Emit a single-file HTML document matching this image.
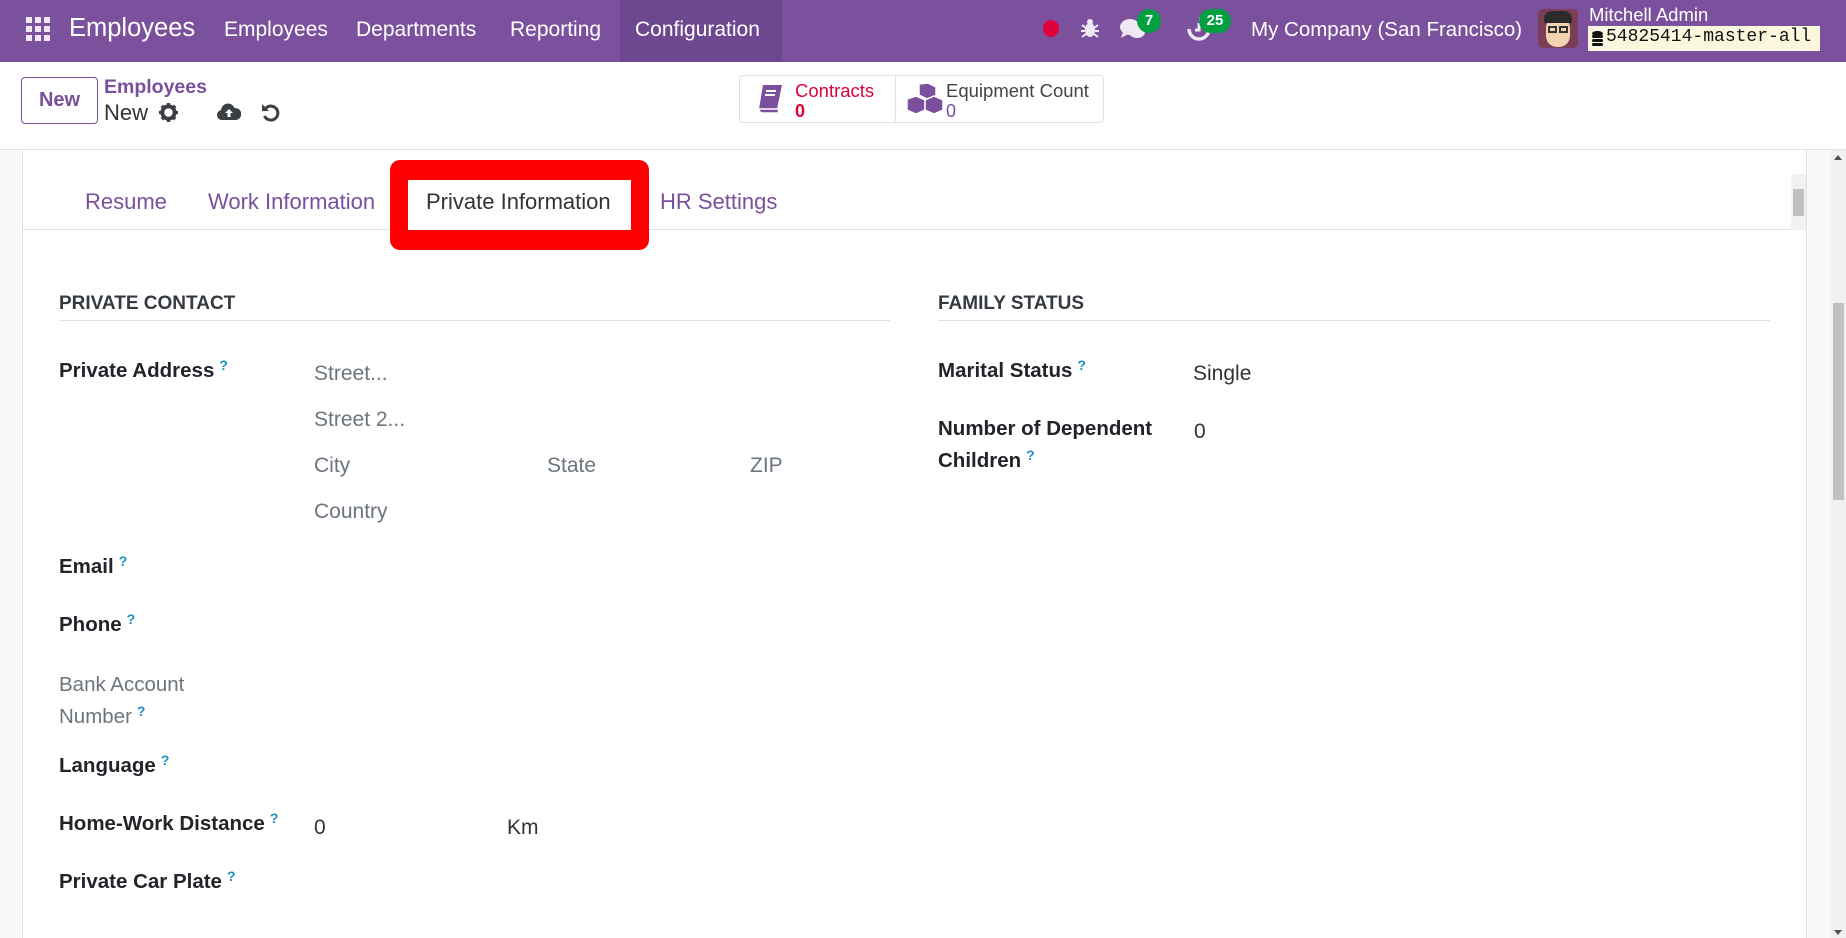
<!DOCTYPE html>
<html><head><meta charset="utf-8">
<style>
*{margin:0;padding:0;box-sizing:border-box}
body{width:1846px;height:938px;overflow:hidden;background:#fff;font-family:"Liberation Sans",sans-serif;position:relative;color:#212529}
.a{position:absolute;white-space:nowrap}
.nav{position:absolute;left:0;top:0;width:1846px;height:62px;background:#7b519d}
.nav .t{color:#fff;font-size:21px;top:18px}
.lbl{font-weight:bold;font-size:20.5px;color:#212529;line-height:24px}
.q{color:#1a8fc4;font-size:14px;font-weight:bold;vertical-align:top;margin-left:5px;position:relative;top:-6px}
.val{font-size:21px;color:#6c757d;line-height:24px}
.tab{font-size:22px;color:#7a4f9c;top:189px}
</style></head><body>
<div class="nav">
  <svg class="a" style="left:26px;top:17px" width="24" height="24" viewBox="0 0 24 24" fill="#f0e8f5">
    <rect x="0" y="0" width="6" height="6"/><rect x="9" y="0" width="6" height="6"/><rect x="18" y="0" width="6" height="6"/>
    <rect x="0" y="9" width="6" height="6"/><rect x="9" y="9" width="6" height="6"/><rect x="18" y="9" width="6" height="6"/>
    <rect x="0" y="18" width="6" height="6"/><rect x="9" y="18" width="6" height="6"/><rect x="18" y="18" width="6" height="6"/>
  </svg>
  <div class="a t" style="left:69px;top:14px;font-size:25.5px">Employees</div>
  <div class="a t" style="left:224px">Employees</div>
  <div class="a t" style="left:356px">Departments</div>
  <div class="a t" style="left:510px">Reporting</div>
  <div class="a" style="left:620px;top:0;width:162px;height:62px;background:#6d4890"></div>
  <div class="a t" style="left:635px">Configuration</div>
  <div class="a" style="left:1043px;top:20px;width:16px;height:17px;border-radius:50%;background:#e0003a"></div>
  <svg class="a" style="left:1081px;top:17px" width="18" height="22" viewBox="0 0 18 22" fill="#f0e8f5"><ellipse cx="9" cy="13" rx="5" ry="7"/><circle cx="9" cy="5" r="3"/><path d="M1 8l4 3M17 8l-4 3M0 14h4M18 14h-4M1 20l4-3M17 20l-4-3" stroke="#f0e8f5" stroke-width="2"/></svg>
  <svg class="a" style="left:1119px;top:17px" width="28" height="24" viewBox="0 0 28 24" fill="#f0e8f5"><ellipse cx="11" cy="10" rx="10" ry="8"/><path d="M4 15l-2 6 7-4z"/><ellipse cx="18" cy="15" rx="8" ry="6" fill="#f0e8f5"/></svg>
  <div class="a" style="left:1137px;top:9px;width:24px;height:24px;border-radius:12px;background:#00a040;color:#fff;font-size:15px;text-align:center;line-height:24px;font-weight:bold">7</div>
  <svg class="a" style="left:1186px;top:16px" width="26" height="26" viewBox="0 0 26 26"><path d="M13 3a10 10 0 1 1-10 10" fill="none" stroke="#f0e8f5" stroke-width="3.5"/><path d="M13 7v7h-4" stroke="#f0e8f5" stroke-width="3" fill="none"/></svg>
  <div class="a" style="left:1199px;top:9px;width:32px;height:24px;border-radius:12px;background:#00a040;color:#fff;font-size:15px;text-align:center;line-height:24px;font-weight:bold">25</div>
  <div class="a t" style="left:1251px;font-size:20.5px">My Company (San Francisco)</div>
  <div class="a" style="left:1538px;top:9px;width:40px;height:39px;border-radius:5px;background:#7a3e57;overflow:hidden">
    <div class="a" style="left:8px;top:8px;width:24px;height:30px;border-radius:11px;background:#f3d3b0"></div>
    <div class="a" style="left:6px;top:2px;width:28px;height:12px;border-radius:8px 8px 2px 2px;background:#2b2b2b"></div>
    <div class="a" style="left:10px;top:17px;width:9px;height:7px;border:2px solid #333"></div>
    <div class="a" style="left:21px;top:17px;width:9px;height:7px;border:2px solid #333"></div>
  </div>
  <div class="a" style="left:1589px;top:4px;color:#fff;font-size:18.5px">Mitchell Admin</div>
  <div class="a" style="left:1588px;top:26px;width:232px;height:25px;background:#fbf7df"></div>
  <svg class="a" style="left:1592px;top:31px" width="11" height="15" viewBox="0 0 11 15" fill="#111"><ellipse cx="5.5" cy="2.5" rx="5.5" ry="2.5"/><rect x="0" y="4" width="11" height="3" rx="1.5"/><rect x="0" y="8" width="11" height="3" rx="1.5"/><rect x="0" y="12" width="11" height="3" rx="1.5"/></svg>
  <div class="a" style="left:1606px;top:27px;font-family:'Liberation Mono',monospace;font-size:18px;color:#111">54825414-master-all</div>
</div>

<div class="a" style="left:21px;top:77px;width:77px;height:47px;border:1px solid #7a4f9c;border-radius:4px;color:#7a4f9c;font-size:20px;font-weight:bold;text-align:center;line-height:45px">New</div>
<div class="a" style="left:104px;top:76px;color:#7a4f9c;font-size:19.5px;font-weight:bold">Employees</div>
<div class="a" style="left:104px;top:100px;color:#333;font-size:22px">New</div>
<svg class="a" style="left:159px;top:103px" width="19" height="19" viewBox="0 0 20 20"><circle cx="10" cy="10" r="6.5" fill="none" stroke="#3c3f43" stroke-width="4"/><path d="M10 0v5M10 15v5M0 10h5M15 10h5M3 3l3.5 3.5M13.5 13.5L17 17M17 3l-3.5 3.5M6.5 13.5L3 17" stroke="#3c3f43" stroke-width="3.5"/></svg>
<svg class="a" style="left:217px;top:103px" width="24" height="17" viewBox="0 0 24 17"><path d="M5 17a5 5 0 0 1-1-9.9A7 7 0 0 1 17.5 5 5.5 5.5 0 0 1 19 17z" fill="#3c3f43"/><path d="M12 6l-4 4h2.5v4h3v-4H16z" fill="#fff"/></svg>
<svg class="a" style="left:261px;top:102px" width="19" height="20" viewBox="0 0 19 20"><path d="M5 6a7 7 0 1 1-1.5 8" fill="none" stroke="#3c3f43" stroke-width="3"/><path d="M1 2v7h7z" fill="#3c3f43"/></svg>

<div class="a" style="left:739px;top:75px;width:365px;height:48px;border:1px solid #dee2e6;border-radius:4px"></div>
<div class="a" style="left:895px;top:75px;width:1px;height:48px;background:#dee2e6"></div>
<svg class="a" style="left:756px;top:84px" width="28" height="30" viewBox="0 0 28 30"><path d="M7 1h19l-5 24H3z" fill="#7a4f9c"/><path d="M3 25q0 4 4 4h15l1-4z" fill="#7a4f9c" stroke="#fff" stroke-width="1.5"/><path d="M10 7h10M9 11h10" stroke="#fff" stroke-width="2"/></svg>
<div class="a" style="left:795px;top:80px;color:#e0003a;font-size:18.5px">Contracts</div>
<div class="a" style="left:795px;top:101px;color:#e0003a;font-size:18px;font-weight:bold">0</div>
<svg class="a" style="left:905px;top:82px" width="42" height="36" viewBox="0 0 42 36" fill="#7a4f9c" stroke="#fff" stroke-width="1.5"><path d="M14 2l9-1 8 4v9l-9 3-8-4z"/><path d="M2 17l9-3 9 4v10l-9 4-9-4z"/><path d="M20 18l9-4 9 4v10l-9 4-9-4z"/></svg>
<div class="a" style="left:946px;top:80px;color:#444;font-size:18.5px">Equipment Count</div>
<div class="a" style="left:946px;top:101px;color:#7a4f9c;font-size:18px">0</div>

<div class="a" style="left:0;top:149px;width:1846px;height:789px;background:#f8f9fa;border-top:1px solid #dee2e6"></div>
<div class="a" style="left:22px;top:150px;width:1785px;height:788px;background:#fff;border-left:1px solid #dee2e6;border-right:1px solid #dee2e6"></div>
<div class="a" style="left:1831px;top:150px;width:15px;height:788px;background:#f1f1f1"></div>
<div class="a" style="left:1833px;top:303px;width:11px;height:197px;background:#c1c1c1"></div>
<div class="a" style="left:1834px;top:155px;width:0;height:0;border:4px solid transparent;border-bottom:5px solid #505050;border-top:0"></div>
<div class="a" style="left:1834px;top:930px;width:0;height:0;border:4px solid transparent;border-top:5px solid #505050;border-bottom:0"></div>

<div class="a" style="left:23px;top:229px;width:1768px;height:1px;background:#dee2e6"></div>
<div class="a" style="left:1791px;top:174px;width:15px;height:56px;background:#f1f1f1"></div>
<div class="a" style="left:1793px;top:189px;width:11px;height:27px;background:#c1c1c1"></div>
<div class="tab a" style="left:85px">Resume</div>
<div class="tab a" style="left:208px">Work Information</div>
<div class="a" style="left:390px;top:160px;width:259px;height:90px;background:#ff0000;border-radius:10px"></div>
<div class="a" style="left:408px;top:180px;width:223px;height:50px;background:#fff"></div>
<div class="tab a" style="left:426px;color:#333">Private Information</div>
<div class="tab a" style="left:660px">HR Settings</div>

<div class="a" style="left:59px;top:293px;font-size:19px;font-weight:bold;color:#343a40">PRIVATE CONTACT</div>
<div class="a" style="left:59px;top:320px;width:831px;height:1px;background:#dee2e6"></div>
<div class="a" style="left:938px;top:293px;font-size:19px;font-weight:bold;color:#343a40">FAMILY STATUS</div>
<div class="a" style="left:938px;top:320px;width:832px;height:1px;background:#dee2e6"></div>

<div class="a lbl" style="left:59px;top:359px">Private Address<span class="q">?</span></div>
<div class="a val" style="left:314px;top:362px">Street...</div>
<div class="a val" style="left:314px;top:408px">Street 2...</div>
<div class="a val" style="left:314px;top:454px">City</div>
<div class="a val" style="left:547px;top:454px">State</div>
<div class="a val" style="left:750px;top:454px">ZIP</div>
<div class="a val" style="left:314px;top:500px">Country</div>
<div class="a lbl" style="left:59px;top:555px">Email<span class="q">?</span></div>
<div class="a lbl" style="left:59px;top:613px">Phone<span class="q">?</span></div>
<div class="a lbl" style="left:59px;top:669px;color:#6c757d;font-weight:normal;line-height:32px">Bank Account<br>Number<span class="q">?</span></div>
<div class="a lbl" style="left:59px;top:754px">Language<span class="q">?</span></div>
<div class="a lbl" style="left:59px;top:812px">Home-Work Distance<span class="q">?</span></div>
<div class="a val" style="left:314px;top:816px;color:#333">0</div>
<div class="a val" style="left:507px;top:816px;color:#333">Km</div>
<div class="a lbl" style="left:59px;top:870px">Private Car Plate<span class="q">?</span></div>

<div class="a lbl" style="left:938px;top:359px">Marital Status<span class="q">?</span></div>
<div class="a val" style="left:1193px;top:362px;color:#333">Single</div>
<div class="a lbl" style="left:938px;top:413px;line-height:32px">Number of Dependent<br>Children<span class="q">?</span></div>
<div class="a val" style="left:1194px;top:420px;color:#333">0</div>
</body></html>
